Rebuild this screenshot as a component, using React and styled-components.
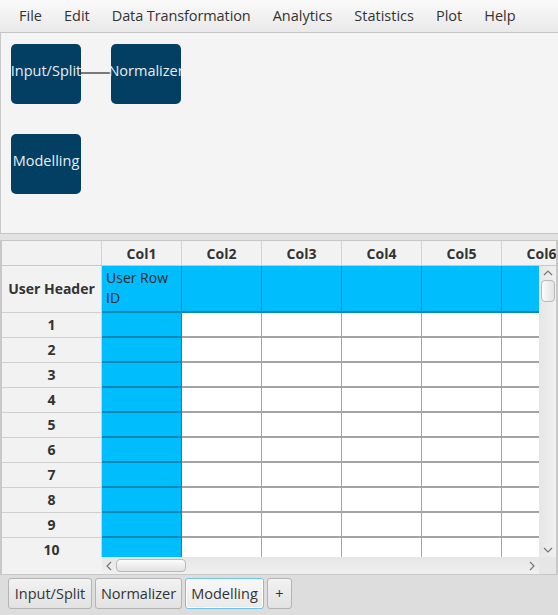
import React from 'react'
import styled, { createGlobalStyle } from 'styled-components'

const Global = createGlobalStyle`
  body {
    margin: 0;
    font-family: "Open Sans", "Noto Sans", sans-serif;
    font-size: 14px;
    color: #333;
  }
`

const Window = styled.div`
  width: 558px;
  height: 615px;
  display: flex;
  flex-direction: column;
  background: #f4f4f4;
  overflow: hidden;
`

const MenuBar = styled.div`
  height: 32px;
  display: flex;
  align-items: center;
  padding-left: 8px;
  background: linear-gradient(#fafafa, #e9e9e9);
  border-bottom: 1px solid #c4c4c4;
  flex-shrink: 0;
`

const MenuItem = styled.span`
  padding: 0 11px;
  font-size: 14.5px;
  color: #333;
  line-height: 32px;
  letter-spacing: ${p => p.tight ? '-0.1px' : '0'};
`

const Canvas = styled.div`
  position: relative;
  height: 200px;
  border-left: 1px solid #c8c8c8;
  background: #f4f4f4;
  flex-shrink: 0;
`

const Node = styled.div`
  position: absolute;
  left: ${p => p.x}px;
  top: ${p => p.y}px;
  width: 70px;
  height: 60px;
  border-radius: 5px;
  background: #033f63;
  color: #e6eef4;
  font-size: 14.5px;
  display: flex;
  align-items: center;
  justify-content: center;
  padding-bottom: 8px;
  box-sizing: border-box;
  white-space: nowrap;
`

const Link = styled.svg`
  position: absolute;
  left: 0;
  top: 0;
`

const Divider = styled.div`
  height: 6px;
  background: #e2e2e2;
  border-top: 1px solid #c6c6c6;
  border-bottom: 1px solid #c6c6c6;
  flex-shrink: 0;
`

const TablePane = styled.div`
  height: 333px;
  display: flex;
  flex-direction: column;
  border-left: 2px solid #c8c8c8;
  border-right: 2px solid #c8c8c8;
  border-bottom: 1px solid #c8c8c8;
  background: #f2f2f2;
  flex-shrink: 0;
`

const HeaderRow = styled.div`
  height: 25px;
  display: flex;
  overflow: hidden;
  flex-shrink: 0;
  border-bottom: 1px solid #c8c8c8;
  box-sizing: border-box;
`

const HeadCell = styled.div`
  width: ${p => p.w}px;
  flex-shrink: 0;
  box-sizing: border-box;
  border-right: 1px solid #d2d2d2;
  background: #f2f2f2;
  font-weight: 700;
  font-size: 14px;
  color: #333;
  display: flex;
  align-items: center;
  justify-content: center;
`

const BodyArea = styled.div`
  height: 291px;
  display: flex;
  flex-shrink: 0;
`

const Viewport = styled.div`
  flex: 1;
  overflow: hidden;
  background: #f2f2f2;
`

const Row = styled.div`
  display: flex;
  height: ${p => p.h}px;
  flex-shrink: 0;
`

const RowHead = styled.div`
  width: 100px;
  flex-shrink: 0;
  box-sizing: border-box;
  border-right: 1px solid #cfcfcf;
  border-bottom: 1px solid #cfcfcf;
  background: #f2f2f2;
  font-weight: 700;
  font-size: 14px;
  line-height: 1;
  color: #333;
  display: flex;
  align-items: center;
  justify-content: center;
`

const Cell = styled.div`
  width: 80px;
  flex-shrink: 0;
  box-sizing: border-box;
  background: ${p => (p.hl ? '#00bdfd' : '#ffffff')};
  border-right: 1px solid ${p => (p.hl ? '#0a88b4' : '#a4a4a4')};
  border-bottom: 2px solid ${p => (p.hl ? '#0a88b4' : '#a4a4a4')};
  font-size: 14px;
  line-height: 20px;
  color: #2a2a2a;
  padding: 2px 4px;
`

const VScroll = styled.div`
  width: 17px;
  flex-shrink: 0;
  background: linear-gradient(90deg, #e6e6e6, #f0f0f0);
  display: flex;
  flex-direction: column;
  align-items: center;
  padding: 4px 0;
  box-sizing: border-box;
`

const HScrollRow = styled.div`
  height: 17px;
  display: flex;
  flex-shrink: 0;
`

const HScrollSpacer = styled.div`
  width: 100px;
  background: #f2f2f2;
`

const HScroll = styled.div`
  flex: 1;
  background: linear-gradient(#e6e6e6, #f0f0f0);
  display: flex;
  align-items: center;
  gap: 4px;
  padding: 0 4px;
`

const Corner = styled.div`
  width: 17px;
  background: #e6e6e6;
`

const Arrow = styled.svg`
  flex-shrink: 0;
`

const Thumb = styled.div`
  box-sizing: border-box;
  width: ${p => p.w}px;
  height: ${p => p.h}px;
  margin-top: ${p => (p.vertical ? 4 : 0)}px;
  border: 1px solid #b9b9b9;
  border-radius: 4px;
  background: linear-gradient(${p => (p.vertical ? '90deg' : '180deg')}, #fbfbfb, #e3e3e3);
`

const Grow = styled.div`
  flex: 1;
`

const TabBar = styled.div`
  flex: 1;
  background: #dddddd;
  display: flex;
  align-items: flex-start;
  gap: 3px;
  padding: 3px 0 0 8px;
`

const TabButton = styled.button`
  margin: 0;
  width: ${p => p.w}px;
  height: 31px;
  padding: 0;
  box-sizing: border-box;
  font-family: inherit;
  font-size: 14.5px;
  color: #333;
  border: 1px solid ${p => (p.focused ? '#6fc4ea' : '#b4b4b4')};
  border-radius: 3px;
  background: ${p => (p.focused ? 'linear-gradient(#f8f8f8, #eaeaea)' : 'linear-gradient(#f2f2f2, #e2e2e2)')};
  box-shadow: ${p => (p.focused ? 'inset 0 0 0 1px #ffffff' : 'none')};
`

const columns = ['Col1', 'Col2', 'Col3', 'Col4', 'Col5', 'Col6']
const rows = [1, 2, 3, 4, 5, 6, 7, 8, 9, 10]
const tabs = [
  { label: 'Input/Split', w: 84 },
  { label: 'Normalizer', w: 87 },
  { label: 'Modelling', w: 79, focused: true },
  { label: '+', w: 25 },
]

const Up = () => (
  <Arrow width="10" height="6" viewBox="0 0 10 6">
    <polyline points="1,5 5,1 9,5" fill="none" stroke="#777" strokeWidth="1.2" />
  </Arrow>
)
const Down = () => (
  <Arrow width="10" height="6" viewBox="0 0 10 6">
    <polyline points="1,1 5,5 9,1" fill="none" stroke="#777" strokeWidth="1.2" />
  </Arrow>
)
const Left = () => (
  <Arrow width="6" height="10" viewBox="0 0 6 10">
    <polyline points="5,1 1,5 5,9" fill="none" stroke="#777" strokeWidth="1.2" />
  </Arrow>
)
const Right = () => (
  <Arrow width="6" height="10" viewBox="0 0 6 10">
    <polyline points="1,1 5,5 1,9" fill="none" stroke="#777" strokeWidth="1.2" />
  </Arrow>
)

export default function App() {
  return (
    <Window>
      <Global />
      <MenuBar>
        {['File', 'Edit', 'Data Transformation', 'Analytics', 'Statistics', 'Plot', 'Help'].map(m => (
          <MenuItem key={m} tight={m === 'Data Transformation'}>{m}</MenuItem>
        ))}
      </MenuBar>
      <Canvas>
        <Link width="200" height="120">
          <line x1="80" y1="40" x2="110" y2="40" stroke="#7a7a7a" strokeWidth="2" />
        </Link>
        <Node x={10} y={11}>Input/Split</Node>
        <Node x={110} y={11}>Normalizer</Node>
        <Node x={10} y={101}>Modelling</Node>
      </Canvas>
      <Divider />
      <TablePane>
        <HeaderRow>
          <HeadCell w={100} />
          {columns.map(c => (
            <HeadCell key={c} w={80}>{c}</HeadCell>
          ))}
        </HeaderRow>
        <BodyArea>
          <Viewport>
            <Row h={47}>
              <RowHead>User Header</RowHead>
              {columns.map((c, i) => (
                <Cell key={c} hl>{i === 0 ? 'User Row ID' : ''}</Cell>
              ))}
            </Row>
            {rows.map(r => (
              <Row key={r} h={25}>
                <RowHead>{r}</RowHead>
                {columns.map((c, i) => (
                  <Cell key={c} hl={i === 0} />
                ))}
              </Row>
            ))}
          </Viewport>
          <VScroll>
            <Up />
            <Thumb vertical w={14} h={22} />
            <Grow />
            <Down />
          </VScroll>
        </BodyArea>
        <HScrollRow>
          <HScrollSpacer />
          <HScroll>
            <Left />
            <Thumb w={70} h={13} />
            <Grow />
            <Right />
          </HScroll>
          <Corner />
        </HScrollRow>
      </TablePane>
      <TabBar>
        {tabs.map(t => (
          <TabButton key={t.label} w={t.w} focused={t.focused}>{t.label}</TabButton>
        ))}
      </TabBar>
    </Window>
  )
}
